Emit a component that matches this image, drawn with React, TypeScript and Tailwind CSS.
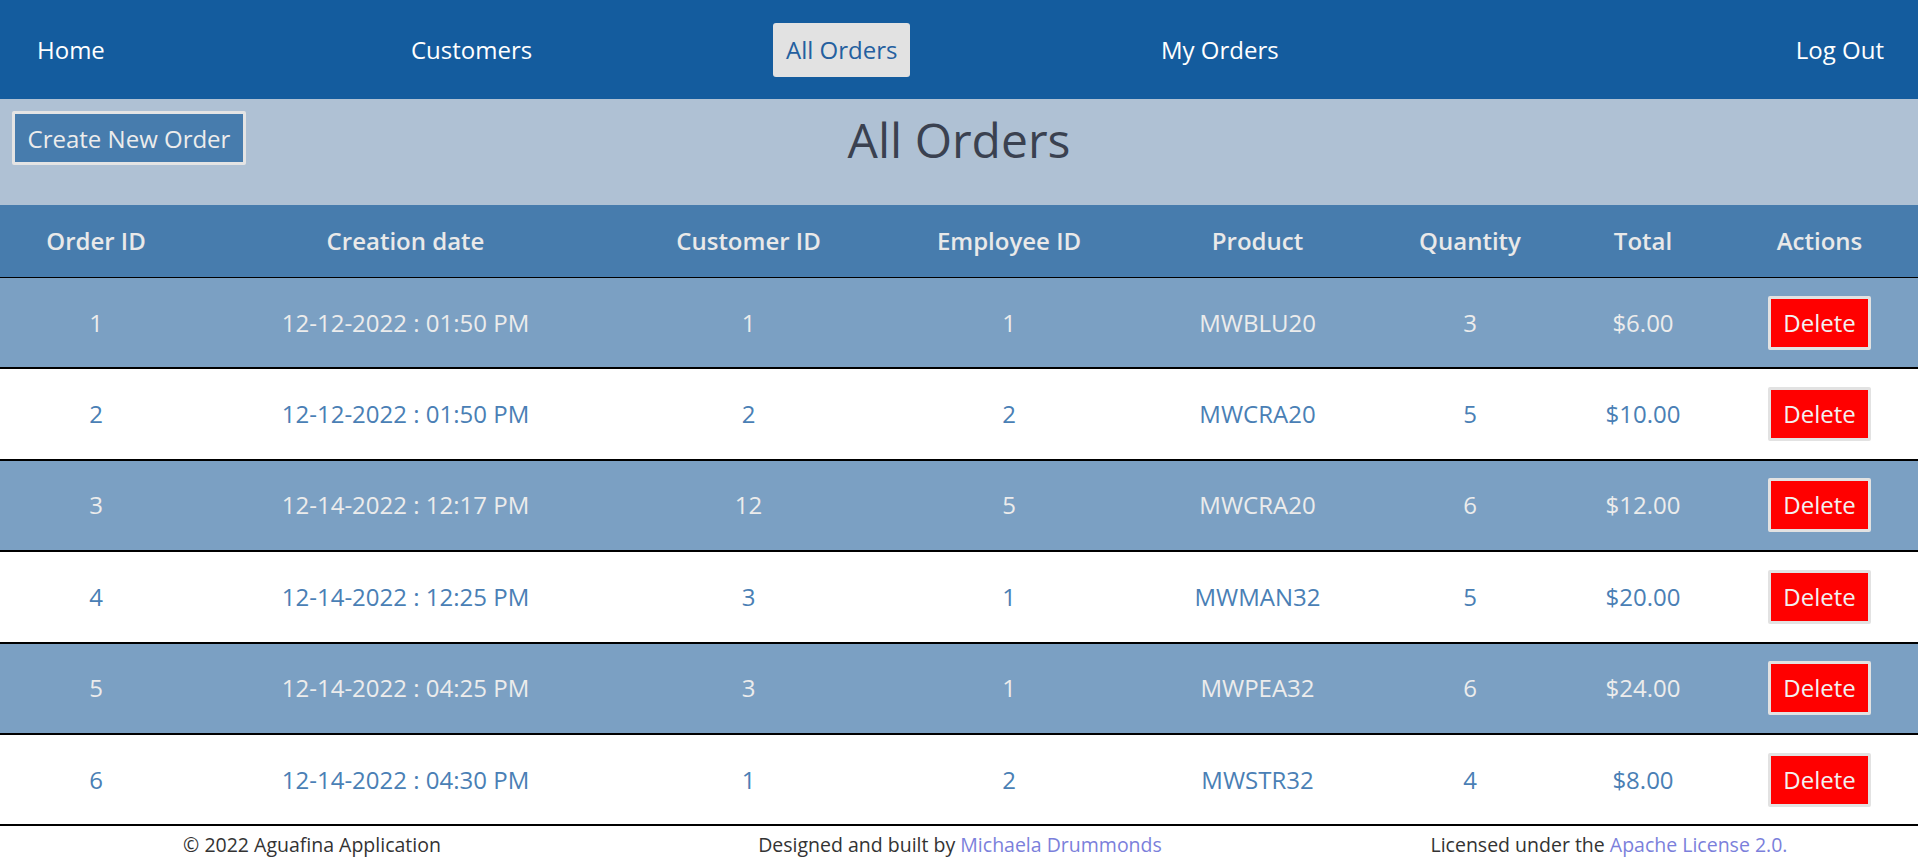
import React from "react";

type Order = {
  id: number;
  created: string;
  customerId: number;
  employeeId: number;
  product: string;
  quantity: number;
  total: string;
};

const orders: Order[] = [
  { id: 1, created: "12-12-2022 : 01:50 PM", customerId: 1, employeeId: 1, product: "MWBLU20", quantity: 3, total: "$6.00" },
  { id: 2, created: "12-12-2022 : 01:50 PM", customerId: 2, employeeId: 2, product: "MWCRA20", quantity: 5, total: "$10.00" },
  { id: 3, created: "12-14-2022 : 12:17 PM", customerId: 12, employeeId: 5, product: "MWCRA20", quantity: 6, total: "$12.00" },
  { id: 4, created: "12-14-2022 : 12:25 PM", customerId: 3, employeeId: 1, product: "MWMAN32", quantity: 5, total: "$20.00" },
  { id: 5, created: "12-14-2022 : 04:25 PM", customerId: 3, employeeId: 1, product: "MWPEA32", quantity: 6, total: "$24.00" },
  { id: 6, created: "12-14-2022 : 04:30 PM", customerId: 1, employeeId: 2, product: "MWSTR32", quantity: 4, total: "$8.00" },
];

const headers = [
  "Order ID",
  "Creation date",
  "Customer ID",
  "Employee ID",
  "Product",
  "Quantity",
  "Total",
  "Actions",
];

const cols = "grid grid-cols-[192px_427px_259px_262px_235px_190px_156px_197px]";

function Navbar() {
  return (
    <nav className="h-[99px] bg-[#145c9e] flex items-center text-[24px] text-white">
      <div className="w-[411px] pl-[37px]">
        <a href="#">Home</a>
      </div>
      <div className="w-[362px]">
        <a href="#">Customers</a>
      </div>
      <div className="w-[388px]">
        <a
          href="#"
          className="inline-flex items-center h-[54px] px-[13px] rounded-[3px] bg-[#e2e2e2] text-[#245f9f]"
        >
          All Orders
        </a>
      </div>
      <div className="flex-1">
        <a href="#">My Orders</a>
      </div>
      <div className="pr-[34px]">
        <a href="#">Log Out</a>
      </div>
    </nav>
  );
}

function PageHeader() {
  return (
    <div className="h-[106px] bg-[#afc1d4] grid grid-cols-[1fr_auto_1fr] items-start">
      <div>
        <button
          type="button"
          className="mt-[12px] ml-[12px] w-[234px] h-[54px] pt-[2px] border-[3px] border-[#e4e4e4] rounded-[2px] bg-[#477cad] text-[#ececec] text-[24px]"
        >
          Create New Order
        </button>
      </div>
      <h1 className="mt-[13px] text-[48px] leading-[56px] text-[#3a4150]">
        All Orders
      </h1>
      <div />
    </div>
  );
}

function OrdersTable() {
  return (
    <div>
      <div
        className={`${cols} h-[73px] items-center bg-[#477cad] border-b border-black text-[24px] font-semibold text-[#e9e9e9] text-center`}
      >
        {headers.map((h) => (
          <div key={h}>{h}</div>
        ))}
      </div>
      {orders.map((o, i) => {
        const odd = i % 2 === 0;
        return (
          <div
            key={o.id}
            className={`${cols} h-[91.4px] items-center border-b-2 border-black text-[24px] text-center ${
              odd ? "bg-[#7ba0c3] text-[#ececec]" : "bg-white text-[#4a7fb5]"
            }`}
          >
            <div>{o.id}</div>
            <div>{o.created}</div>
            <div>{o.customerId}</div>
            <div>{o.employeeId}</div>
            <div>{o.product}</div>
            <div>{o.quantity}</div>
            <div>{o.total}</div>
            <div className="flex justify-center">
              <button
                type="button"
                className="w-[103px] h-[54px] border-[3px] border-[#e2e2e2] rounded-[2px] bg-[#ff0000] text-[#f2f2f2] text-[24px]"
              >
                Delete
              </button>
            </div>
          </div>
        );
      })}
    </div>
  );
}

function Footer() {
  return (
    <footer className="h-[37px] grid grid-cols-[624px_672px_622px] items-center text-[19.5px] text-[#333333] text-center">
      <p>© 2022 Aguafina Application</p>
      <p>
        Designed and built by{" "}
        <a href="#" className="text-[#7b7fdb]">
          Michaela Drummonds
        </a>
      </p>
      <p className="pl-[4px]">
        Licensed under the{" "}
        <a href="#" className="text-[#7b7fdb]">
          Apache License 2.0.
        </a>
      </p>
    </footer>
  );
}

export default function App() {
  return (
    <div className="min-h-screen bg-white font-['Open_Sans',sans-serif]">
      <Navbar />
      <PageHeader />
      <OrdersTable />
      <Footer />
    </div>
  );
}
